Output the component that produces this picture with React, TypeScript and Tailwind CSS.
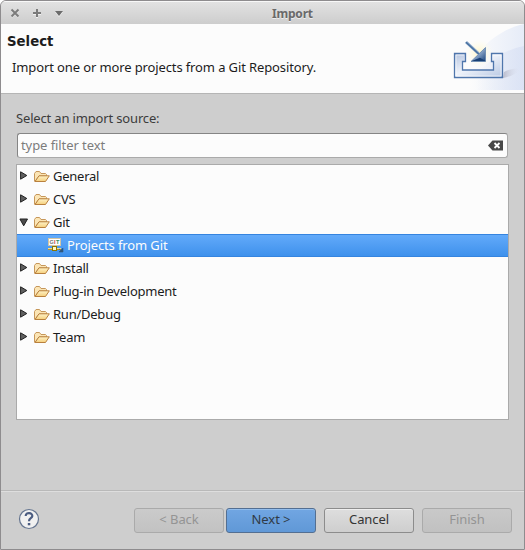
import React from "react";

function Folder() {
  return (
    <svg width="16" height="13" viewBox="0 0 16 13" className="shrink-0">
      <defs>
        <linearGradient id="fold" x1="0" y1="0" x2="0" y2="1">
          <stop offset="0" stopColor="#fff3c8" />
          <stop offset="1" stopColor="#f5cf7c" />
        </linearGradient>
      </defs>
      <path d="M.5 11V3.5L2 1.5H5.5L7 3.5H11.5L12.5 4.5V6H5L1 11.5Z" fill="#fbe5b5" stroke="#c6975a" />
      <path d="M1 11.5L5 5.8H15.3L11.5 11.5Z" fill="url(#fold)" stroke="#b9803e" strokeLinejoin="round" />
    </svg>
  );
}

function Arrow({ open }: { open?: boolean }) {
  return open ? (
    <svg width="10" height="9" viewBox="0 0 10 9" className="mr-[5px] -ml-px mb-px shrink-0">
      <path d="M.9 1H8.5L4.7 7.8Z" fill="#4c4c4c" stroke="#222" />
    </svg>
  ) : (
    <svg width="9" height="9" viewBox="0 0 9 9" className="mr-[5px] mb-[2px] shrink-0">
      <path d="M.6 .8V8.2L6.8 4.5Z" fill="#606060" stroke="#222" />
    </svg>
  );
}

function GitIcon() {
  return (
    <svg width="16" height="15" viewBox="0 0 16 15" className="shrink-0">
      <rect x=".5" y=".5" width="12" height="7" fill="#fff" stroke="#d3c5a4" />
      <text y="6" className="font-['Liberation_Sans',sans-serif] text-[5.5px] font-bold">
        <tspan x="1.5" fill="#777">G</tspan>
        <tspan x="6" fill="#d03838">I</tspan>
        <tspan x="8" fill="#2f8f55">T</tspan>
      </text>
      <path d="M0 10.5H13" stroke="#f3dc8c" />
      <path d="M0 11.5H13" stroke="#b8952c" />
      <rect x="4.5" y="8.5" width="4" height="4" fill="#fff9c8" stroke="#8b7600" />
      <path d="M11 11L13 12.5M15 10V14H11Z" fill="#31577d" stroke="#31577d" strokeWidth=".6" />
    </svg>
  );
}

function Row({ name, open }: { name: string; open?: boolean }) {
  return (
    <div className="flex h-[23px] items-center pl-[3px]">
      <Arrow open={open} />
      <Folder />
      <span className="ml-[3px] tracking-[-0.24px] whitespace-nowrap">{name}</span>
    </div>
  );
}

function ImportArt() {
  return (
    <svg width="100" height="66" viewBox="0 0 100 66" className="block shrink-0">
      <defs>
        <linearGradient id="sky" x1="0" y1="0" x2="1" y2="0">
          <stop offset=".2" stopColor="#fcfcfc" />
          <stop offset="1" stopColor="#e6ecf8" />
        </linearGradient>
        <linearGradient id="tray" x1="0" y1="0" x2="1" y2="1">
          <stop offset="0" stopColor="#b3c3df" />
          <stop offset=".45" stopColor="#eef2fa" />
          <stop offset="1" stopColor="#b7c7e3" />
        </linearGradient>
        <linearGradient id="head" x1="0" y1="0" x2="1" y2="1">
          <stop offset=".35" stopColor="#a9c0dd" />
          <stop offset="1" stopColor="#18437c" />
        </linearGradient>
        <linearGradient id="shade" x1="0" y1="0" x2="1" y2="0">
          <stop offset="0" stopColor="#b9bbcb" />
          <stop offset="1" stopColor="#dfe4f2" stopOpacity="0" />
        </linearGradient>
        <linearGradient id="wave" x1="0" y1="0" x2="1" y2="0">
          <stop offset=".2" stopColor="#d3dcf2" stopOpacity="0" />
          <stop offset="1" stopColor="#d3dcf2" stopOpacity=".6" />
        </linearGradient>
        <radialGradient id="glow">
          <stop offset="0" stopColor="#fff7c8" />
          <stop offset="1" stopColor="#fffde9" stopOpacity="0" />
        </radialGradient>
      </defs>
      <path d="M32 66C47 31 69 7 100 0V66Z" fill="url(#sky)" />
      <path d="M40 66C60 39 76 27 100 22V66Z" fill="url(#wave)" />
      <path d="M79 54L80 48C87 44 95 44 96 45C93 50 85 53 79 54Z" fill="url(#shade)" />
      <circle cx="55" cy="29" r="14" fill="url(#glow)" />
      <path d="M30.5 29.5H41.5V37.5H38.5V46H69.5V37.5H67.5V29.5H78.5V53.5H30.5Z" fill="url(#tray)" stroke="#4f76ac" strokeWidth="1.3" />
      <path d="M32 31H40M32 31V52H77V31H69" fill="none" stroke="#fff" opacity=".6" />
      <path d="M42 18L54.5 29.5" stroke="#8fa9cc" strokeWidth="3" />
      <path d="M42 18.3L55 30.3" stroke="#46709f" strokeWidth="1.4" />
      <path d="M61.5 23.5V37.5H47L54 30.8Z" fill="url(#head)" stroke="#6283ac" strokeWidth=".8" />
      <path d="M47.5 37L56 33.8L61.5 37Z" fill="#173f74" />
    </svg>
  );
}

const base = "flex h-[25px] w-[90px] items-center justify-center rounded-[3px] border pb-px tracking-[-0.08px] whitespace-nowrap ";

export default function App() {
  return (
    <div className="flex h-[550px] w-[525px] flex-col overflow-hidden rounded-t-[6px] border border-[#8e8c8e] bg-[#cecece] font-['Noto_Sans',sans-serif] text-[13px] text-[#1c1c1c]">
      <header className="flex h-[23px] shrink-0 items-center border-t border-[#f8f8f8] bg-gradient-to-b from-[#e2e2e2] to-[#cdcdcd]">
        <svg width="66" height="22" viewBox="0 0 66 22" className="shrink-0" fill="none">
          <path d="M10.5 8L17.5 15M17.5 8L10.5 15" stroke="#f1f1f1" strokeWidth="2" />
          <path d="M10.5 7.5L17.5 14.5M17.5 7.5L10.5 14.5" stroke="#7b7b7b" strokeWidth="2" />
          <path d="M32 12H40M36 8V16" stroke="#f1f1f1" strokeWidth="2" />
          <path d="M32 11H40M36 7V15" stroke="#7b7b7b" strokeWidth="2" />
          <path d="M54 10H62L58 15Z" fill="#f3f3f3" />
          <path d="M54 9H62L58 14Z" fill="#6c6c6c" />
        </svg>
        <span className="ml-[205px] pt-px text-[12px] tracking-[-0.2px] font-bold text-[#696969] [text-shadow:0_1px_0_#eee]">Import</span>
      </header>

      <section className="flex h-[69px] shrink-0 justify-between bg-[#fcfcfc]">
        <div className="pt-[8px] pl-[6px]">
          <h1 className="font-['DejaVu_Sans',sans-serif] text-[13.3px] leading-5 font-bold">Select</h1>
          <p className="mt-[6px] ml-[5px] leading-[18px] tracking-[-0.12px] whitespace-nowrap">Import one or more projects from a Git Repository.</p>
        </div>
        <ImportArt />
      </section>

      <main className="flex h-[397px] shrink-0 flex-col border-t border-[#b5b5b5] px-[15px] pt-[15px]">
        <label className="leading-[18px] tracking-[-0.16px] text-[#3c3c3c]">Select an import source:</label>
        <div className="mt-[6px] ml-px flex h-[25px] w-[491px] shrink-0 items-center justify-between rounded-[3px] border border-[#aaa] border-t-[#858585] border-l-[#858585] bg-[#fcfcfc] pr-[3px] pl-[3px] text-[#7c7c7c]">
          <span className="tracking-[-0.08px]">type filter text</span>
          <svg width="16" height="11" viewBox="0 0 16 11">
            <path d="M0 5.5L4.5 .5H15V10.5H4.5Z" fill="#484848" />
            <path d="M6.5 3L11.5 8M11.5 3L6.5 8" stroke="#fff" strokeWidth="1.8" />
          </svg>
        </div>
        <div className="mt-[6px] h-[256px] w-[493px] border border-[#aaa] bg-[#fcfcfc]">
          <Row name="General" />
          <Row name="CVS" />
          <Row name="Git" open />
          <div className="flex h-[23px] items-center border-y border-[#3584df] bg-gradient-to-b from-[#62aafa] to-[#3e91ec] pl-[31px] text-[#fcfcfc]">
            <GitIcon />
            <span className="ml-[3px] tracking-[-0.12px]">Projects from Git</span>
          </div>
          <Row name="Install" />
          <Row name="Plug-in Development" />
          <Row name="Run/Debug" />
          <Row name="Team" />
        </div>
      </main>

      <footer className="flex flex-1 items-start border-t border-[#b9b9b9] px-[12px] pt-[17px] shadow-[inset_0_1px_0_#dedede]">
        <svg width="22" height="22" viewBox="0 0 22 22" className="mr-[94px] ml-[5px] shrink-0">
          <circle cx="11" cy="11" r="9.5" fill="#f1f1f1" stroke="#657590" strokeWidth="1.2" />
          <path d="M7.7 8.1C7.7 3.7 14.8 4.4 14.3 8.2C14 10.5 11 10 11 13.2" fill="none" stroke="#4c5d82" strokeWidth="2.2" />
          <rect x="9.8" y="15" width="2.5" height="2.3" fill="#4c5d82" />
        </svg>
        <button className={base + "border-[#aaa] bg-gradient-to-b from-[#cbcbcb] to-[#c2c2c2] text-[#949494]"}>&lt; Back</button>
        <button className={base + "ml-[2px] border-[#536f92] bg-gradient-to-b from-[#71a6e2] to-[#6098d7] text-[#303a46] shadow-[inset_0_1px_0_#91bded]"}>Next &gt;</button>
        <button className={base + "ml-[8px] border-[#8c8c8c] bg-gradient-to-b from-[#dedede] to-[#cecece] text-[#343434] shadow-[inset_0_1px_0_#eee]"}>Cancel</button>
        <button className={base + "ml-[8px] border-[#aaa] bg-gradient-to-b from-[#c9c9c9] to-[#c1c1c1] text-[#949494]"}>Finish</button>
      </footer>
    </div>
  );
}
